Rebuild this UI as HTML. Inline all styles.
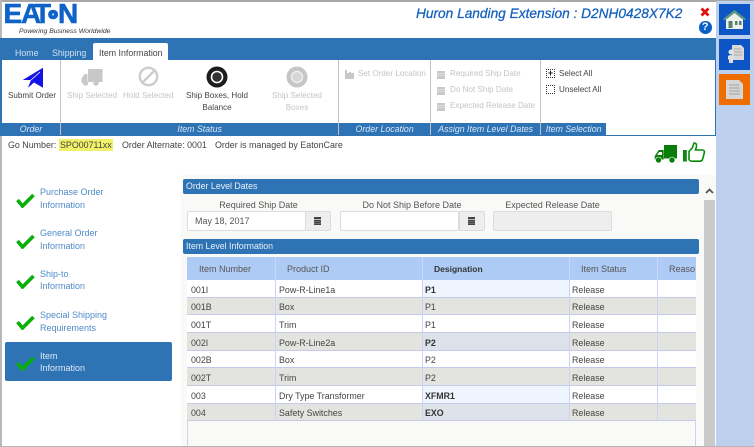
<!DOCTYPE html>
<html><head><meta charset="utf-8"><style>
html,body{margin:0;padding:0;background:#fff}
body{width:754px;height:447px;position:relative;overflow:hidden;font-family:"Liberation Sans",sans-serif;color:#444}
#w{position:absolute;left:0;top:0;width:754px;height:447px;overflow:hidden;background:#fff;filter:blur(.25px)}
.a{position:absolute}
.t{position:absolute;white-space:nowrap;font-size:8.1px;line-height:12px}
.c{text-align:center}
.dis{color:#c4c4c4}
.foot{position:absolute;top:123px;height:12px;background:#2e74b5;color:#d9e6f5;font-style:italic;font-size:8.8px;line-height:12px;text-align:center;white-space:nowrap;overflow:hidden}
.sec{position:absolute;left:183px;width:516px;background:#2e74b5;color:#e8f0fa;font-size:8.8px;border-radius:2px}
.nav{position:absolute;left:40px;font-size:9px;line-height:12.6px;color:#4f8ac8;white-space:nowrap}
.lbl{position:absolute;top:199px;font-size:9px;line-height:12px;color:#555;white-space:nowrap;text-align:center}
.inp{position:absolute;top:211px;height:18px;border:1px solid #dcdcdc;border-radius:2px;background:#fff;box-sizing:content-box}
.add{position:absolute;top:211px;width:24px;height:18px;border:1px solid #dcdcdc;border-radius:0 2px 2px 0;background:#eeeeee}
.r{position:absolute;left:187px;width:509px;height:16.7px;border-bottom:1px solid #c5c9ea}
.r.g{background:#e3e3e0}
.r.w{background:#fff}
.r span{position:absolute;top:3.5px;font-size:8.9px;line-height:12px;color:#444;white-space:nowrap}
.r i{position:absolute;top:0;bottom:-1px;width:1px;background:#cdd2ee}
.r b.bg{position:absolute;left:236px;width:146px;top:0;bottom:0}
.r strong{position:absolute;top:3.5px;left:238px;font-size:8.8px;line-height:12px;color:#333}
.h{position:absolute;top:262.5px;font-size:9px;line-height:12px;color:#555;white-space:nowrap}
.lg{position:absolute;font-weight:bold;color:#0f62c8;line-height:28px;font-size:28px;white-space:nowrap;transform-origin:0 0}
</style></head><body><div id="w">
<!-- frame -->
<div class="a" style="left:0;top:0;width:754px;height:1.5px;background:#a8a8a8"></div>
<div class="a" style="left:0;top:0;width:1.5px;height:447px;background:#b8b8b8"></div>
<div class="a" style="left:0;top:445.5px;width:754px;height:1.5px;background:#b4b4b4"></div>
<!-- right rail -->
<div class="a" style="left:716px;top:1px;width:38px;height:445px;background:#bdd0ee"></div>
<div class="a" style="left:719px;top:4px;width:31px;height:31px;background:#0d55c4"></div>
<svg class="a" style="left:719px;top:4px" width="31" height="31" viewBox="0 0 31 31"><path d="M4 15L15.500 6 27 15l-1.500 1L15.500 9 5.500 16z" fill="#5e9c78"/><rect x="7" y="15" width="17" height="10" fill="#f0f0ea"/><path d="M15.500 9L7 15.500h17z" fill="#f0f0ea"/><rect x="9.500" y="17" width="4" height="7" fill="#55806a"/><rect x="16" y="17" width="2.500" height="4" fill="#55806a"/><rect x="20" y="17" width="2.500" height="4" fill="#55806a"/></svg>
<div class="a" style="left:719px;top:39px;width:31px;height:31px;background:#0d55c4"></div>
<svg class="a" style="left:719px;top:39px" width="31" height="31" viewBox="0 0 31 31"><path d="M13 6h9l3 3v12H13z" fill="#d8d8d8"/><path d="M15 10h7M15 13h8M15 16h8" stroke="#aaa" fill="none"/><circle cx="12" cy="13" r="2.500" fill="#e6e6e6"/><path d="M9 17q3-2 6 0v3l-1 1v3h-4v-3l-1-1z" fill="#e0e0e0"/></svg>
<div class="a" style="left:719px;top:74px;width:31px;height:31px;background:#ee6c00"></div>
<svg class="a" style="left:719px;top:74px" width="31" height="31" viewBox="0 0 31 31"><path d="M7 6h13l4 4v15H7z" fill="#d6d6d6"/><path d="M10 11h10M10 14h11M10 17h11M10 20h11" stroke="#a2a2a2" fill="none"/></svg>
<!-- logo -->
<div class="lg" style="left:3.500px;top:0;-webkit-text-stroke:.6px #0f62c8">E</div>
<div class="lg" style="left:21px;top:0;-webkit-text-stroke:.4px #0f62c8">A</div>
<div class="lg" style="left:34px;top:0;-webkit-text-stroke:.4px #0f62c8">T</div>
<div class="lg" style="left:49px;top:9.500px;font-size:10.500px;line-height:11px;-webkit-text-stroke:2.600px #0f62c8">O</div>
<div class="lg" style="left:58px;top:0;-webkit-text-stroke:.6px #0f62c8">N</div>
<div class="t" style="left:19px;top:26px;font-size:6.800px;font-style:italic;color:#333">Powering Business Worldwide</div>
<!-- title -->
<div class="t" style="left:416px;top:5px;font-size:13.700px;line-height:17px;font-style:italic;color:#1260be;-webkit-text-stroke:.25px #1260be">Huron Landing Extension : D2NH0428X7K2</div>
<svg class="a" style="left:699px;top:6px" width="12" height="12" viewBox="0 0 12 12"><path d="M2.500 2.500l7 7M9.500 2.500l-7 7" stroke="#e01010" stroke-width="2.800"/></svg>
<div class="a" style="left:699px;top:21px;width:12.500px;height:12.500px;border-radius:50%;background:#0b5fc8;color:#fff;font-weight:bold;font-size:11px;line-height:12.500px;text-align:center">?</div>
<!-- ribbon -->
<div class="a" style="left:0;top:38px;width:716px;height:98px;background:#2e74b5;box-sizing:border-box"></div>
<div class="a" style="left:2px;top:60px;width:712.500px;height:75px;background:#fff"></div>
<div class="t" style="left:15px;top:46.500px;font-size:8.800px;color:#cfe0f3">Home</div>
<div class="t" style="left:52px;top:46.500px;font-size:8.800px;color:#cfe0f3">Shipping</div>
<div class="a" style="left:93px;top:43px;width:75px;height:18px;background:#fff;border-radius:2px 2px 0 0"></div>
<div class="t" style="left:99px;top:46.500px;font-size:8.800px;color:#444">Item Information</div>
<!-- group separators -->
<div class="a" style="left:60px;top:60px;width:1.300px;height:75px;background:#c2c2c2"></div>
<div class="a" style="left:338px;top:60px;width:1.300px;height:75px;background:#c2c2c2"></div>
<div class="a" style="left:430px;top:60px;width:1.300px;height:75px;background:#c2c2c2"></div>
<div class="a" style="left:540px;top:60px;width:1.300px;height:75px;background:#c2c2c2"></div>
<div class="foot" style="left:2px;width:58px">Order</div>
<div class="foot" style="left:61.300px;width:276.700px">Item Status</div>
<div class="foot" style="left:339.300px;width:90.700px">Order Location</div>
<div class="foot" style="left:431.300px;width:108.700px">Assign Item Level Dates</div>
<div class="foot" style="left:541.300px;width:64.700px">Item Selection</div>
<!-- ribbon icons -->
<svg class="a" style="left:22px;top:67px" width="22" height="22" viewBox="0 0 22 22"><path d="M21 .7L.7 13 9 13 6 20.700 12 15.500 21 20.700z" fill="#1212e6"/><path d="M18 5L9 13" stroke="#fff" stroke-width=".8"/></svg>
<svg class="a" style="left:81px;top:68px" width="22" height="19" viewBox="0 0 22 19"><rect x="7" y="1" width="14.500" height="13" fill="#c8c8c8"/><path d="M.5 10.500l3-4.500h3v9H.5z" fill="#c8c8c8"/><circle cx="4.500" cy="15" r="2.700" fill="#c8c8c8"/><circle cx="15" cy="15" r="2.700" fill="#c8c8c8"/></svg>
<svg class="a" style="left:138px;top:66px" width="21" height="21" viewBox="0 0 21 21"><circle cx="10.500" cy="10.500" r="8.700" fill="none" stroke="#cdcdcd" stroke-width="2.400"/><path d="M4.500 16.500l12-12" stroke="#cdcdcd" stroke-width="2.400"/></svg>
<svg class="a" style="left:206px;top:66px" width="22" height="22" viewBox="0 0 22 22"><circle cx="11" cy="11" r="10.500" fill="#1d1d1d"/><circle cx="11" cy="11" r="5.500" fill="none" stroke="#fff" stroke-width="1.600"/><circle cx="11" cy="11" r="4.500" fill="#333"/></svg>
<svg class="a" style="left:286px;top:66px" width="22" height="22" viewBox="0 0 22 22"><circle cx="11" cy="11" r="10.500" fill="#c6c6c6"/><circle cx="11" cy="11" r="5.500" fill="#d6d6d6" stroke="#eee" stroke-width="1.500"/></svg>
<div class="t" style="left:8px;top:90px;color:#444">Submit Order</div>
<div class="t dis" style="left:67px;top:90px">Ship Selected</div>
<div class="t dis" style="left:123px;top:90px">Hold Selected</div>
<div class="t c" style="left:176px;top:90px;width:82px;line-height:12px;color:#444">Ship Boxes, Hold<br>Balance</div>
<div class="t c dis" style="left:262px;top:90px;width:70px;line-height:12px">Ship Selected<br>Boxes</div>
<svg class="a" style="left:345px;top:70px" width="9" height="9" viewBox="0 0 9 9"><path d="M0 0h2v3h2v-1h2v1h3v6H0z" fill="#c8c8c8"/></svg>
<div class="t dis" style="left:358px;top:68px">Set Order Location</div>
<svg class="a" style="left:437px;top:70px" width="8" height="9" viewBox="0 0 8 9"><path d="M0 1h8v8H0z" fill="#c8c8c8"/><path d="M0 3.500h8M0 5.500h8" stroke="#eee" stroke-width=".6"/></svg>
<svg class="a" style="left:437px;top:86px" width="8" height="9" viewBox="0 0 8 9"><path d="M0 1h8v8H0z" fill="#c8c8c8"/><path d="M0 3.500h8M0 5.500h8" stroke="#eee" stroke-width=".6"/></svg>
<svg class="a" style="left:437px;top:102px" width="8" height="9" viewBox="0 0 8 9"><path d="M0 1h8v8H0z" fill="#c8c8c8"/><path d="M0 3.500h8M0 5.500h8" stroke="#eee" stroke-width=".6"/></svg>
<div class="t dis" style="left:450px;top:68px">Required Ship Date</div>
<div class="t dis" style="left:450px;top:84px">Do Not Ship Date</div>
<div class="t dis" style="left:450px;top:100px">Expected Release Date</div>
<div class="a" style="left:546px;top:69px;width:7px;height:7px;border:1px dotted #333"></div>
<div class="a" style="left:546px;top:69px;width:9px;height:9px;font-size:9px;line-height:9px;text-align:center;color:#222;font-weight:bold">+</div>
<div class="a" style="left:546px;top:85px;width:7px;height:7px;border:1px dotted #333"></div>
<div class="t" style="left:559px;top:68px">Select All</div>
<div class="t" style="left:559px;top:84px">Unselect All</div>
<!-- go line -->
<div class="a" style="left:59px;top:139px;width:54px;height:12px;background:#f1f167"></div>
<div class="t" style="left:8px;top:139px;font-size:8.900px;color:#444">Go Number:</div>
<div class="t" style="left:60px;top:139px;font-size:8.900px;color:#444">SPO00711xx</div>
<div class="t" style="left:122px;top:139px;font-size:8.900px;color:#444">Order Alternate: 0001</div>
<div class="t" style="left:215px;top:139px;font-size:8.900px;color:#444">Order is managed by EatonCare</div>
<svg class="a" style="left:654px;top:144px" width="24" height="20" viewBox="0 0 24 20"><rect x="10" y="1" width="13" height="13.500" fill="#0a7d0a"/><path d="M.7 12l4-6h5v9.500H.7z" fill="#0a7d0a"/><path d="M3 11l2.200-3H8v3z" fill="#fff"/><circle cx="4.500" cy="16" r="3" fill="#0a7d0a" stroke="#fff" stroke-width=".6"/><circle cx="18" cy="16" r="3" fill="#0a7d0a" stroke="#fff" stroke-width=".6"/></svg>
<svg class="a" style="left:682px;top:141px" width="25" height="22" viewBox="0 0 25 22"><rect x="1" y="9" width="3.800" height="11.500" fill="#0a8a0a"/><path d="M7 10.500l3.500-4 1.500-4.500q3 0 2.500 3.500L13.500 9h6.500q3 0 2.300 2.800l-1.600 6q-.5 2.400-3 2.400H10.500q-2.500 0-3.500-1.700z" fill="#fff" stroke="#0a8a0a" stroke-width="1.600"/></svg>
<!-- sidebar -->
<div class="a" style="left:5px;top:342px;width:167px;height:39px;background:#2e74b5;border-radius:2px"></div>
<div class="nav" style="top:186px">Purchase Order<br>Information</div>
<div class="nav" style="top:227px">General Order<br>Information</div>
<div class="nav" style="top:267.500px">Ship-to<br>Information</div>
<div class="nav" style="top:309px">Special Shipping<br>Requirements</div>
<div class="nav" style="top:349.500px;color:#dce8f6">Item<br>Information</div>
<svg class="a" style="left:16px;top:192px" width="19" height="16" viewBox="0 0 19 16"><path d="M1.500 8l5 6L17.500 3" fill="none" stroke="#06b006" stroke-width="3.600"/></svg>
<svg class="a" style="left:16px;top:233px" width="19" height="16" viewBox="0 0 19 16"><path d="M1.500 8l5 6L17.500 3" fill="none" stroke="#06b006" stroke-width="3.600"/></svg>
<svg class="a" style="left:16px;top:273px" width="19" height="16" viewBox="0 0 19 16"><path d="M1.500 8l5 6L17.500 3" fill="none" stroke="#06b006" stroke-width="3.600"/></svg>
<svg class="a" style="left:16px;top:314px" width="19" height="16" viewBox="0 0 19 16"><path d="M1.500 8l5 6L17.500 3" fill="none" stroke="#06b006" stroke-width="3.600"/></svg>
<svg class="a" style="left:16px;top:355px" width="19" height="16" viewBox="0 0 19 16"><path d="M1.500 8l5 6L17.500 3" fill="none" stroke="#06b006" stroke-width="3.600"/></svg>
<!-- main -->
<div class="a" style="left:181px;top:175px;width:535px;height:270.500px;background:#f9f9f8"></div>
<div class="a" style="left:704px;top:200px;width:11px;height:245.500px;background:#cacaca"></div>
<svg class="a" style="left:704px;top:187px" width="11" height="8" viewBox="0 0 11 8"><path d="M2 6l3.500-3.500L9 6" fill="none" stroke="#555" stroke-width="1.800"/></svg>
<div class="sec" style="top:179px;height:15px;line-height:15px;text-indent:3px">Order Level Dates</div>
<div class="lbl" style="left:187px;width:143px">Required Ship Date</div>
<div class="lbl" style="left:340px;width:144px">Do Not Ship Before Date</div>
<div class="lbl" style="left:493px;width:119px">Expected Release Date</div>
<div class="inp" style="left:187px;width:117px"></div>
<div class="add" style="left:305px"></div>
<div class="t" style="left:195px;top:215px;font-size:9px;color:#555">May 18, 2017</div>
<div class="inp" style="left:340px;width:117px"></div>
<div class="add" style="left:459px"></div>
<div class="inp" style="left:493px;width:117px;background:#eeeeee"></div>
<svg class="a" style="left:313px;top:216px" width="9" height="9" viewBox="0 0 9 9"><path d="M1 1h7v8H1z" fill="#444"/><path d="M1 3.500h7" stroke="#eee" stroke-width=".7"/><path d="M1 5.500h7M1 7.300h7" stroke="#999" stroke-width=".5"/></svg>
<svg class="a" style="left:467px;top:216px" width="9" height="9" viewBox="0 0 9 9"><path d="M1 1h7v8H1z" fill="#444"/><path d="M1 3.500h7" stroke="#eee" stroke-width=".7"/><path d="M1 5.500h7M1 7.300h7" stroke="#999" stroke-width=".5"/></svg>
<div class="sec" style="top:239px;height:14.500px;line-height:14.500px;text-indent:3px">Item Level Information</div>
<!-- table -->
<div class="a" style="left:187px;top:257px;width:509px;height:188.500px;border-left:1px solid #cdd2ee;border-right:1px solid #cdd2ee;box-sizing:border-box"></div>
<div class="a" style="left:187px;top:257px;width:509px;height:23px;background:#aecbf5"></div>
<div class="a" style="left:275px;top:257px;width:1px;height:23px;background:#c8d8f2"></div>
<div class="a" style="left:422px;top:257px;width:1px;height:23px;background:#c8d8f2"></div>
<div class="a" style="left:569px;top:257px;width:1px;height:23px;background:#c8d8f2"></div>
<div class="a" style="left:657px;top:257px;width:1px;height:23px;background:#c8d8f2"></div>
<div class="h" style="left:199px">Item Number</div>
<div class="h" style="left:287px">Product ID</div>
<div class="h" style="left:434px;font-weight:bold;color:#333;font-size:8.500px">Designation</div>
<div class="h" style="left:581px">Item Status</div>
<div class="h" style="left:669px;width:26px;overflow:hidden">Reaso</div>

<div class="r w" style="top:280px"><b class="bg" style="background:#eff5fe"></b><span style="left:4px">001I</span><span style="left:92px">Pow-R-Line1a</span><strong>P1</strong><span style="left:385px">Release</span><i style="left:88px"></i><i style="left:235px"></i><i style="left:382px"></i><i style="left:470px"></i></div>
<div class="r g" style="top:297.700px"><span style="left:4px">001B</span><span style="left:92px">Box</span><span style="left:238px">P1</span><span style="left:385px">Release</span><i style="left:88px"></i><i style="left:235px"></i><i style="left:382px"></i><i style="left:470px"></i></div>
<div class="r w" style="top:315.400px"><span style="left:4px">001T</span><span style="left:92px">Trim</span><span style="left:238px">P1</span><span style="left:385px">Release</span><i style="left:88px"></i><i style="left:235px"></i><i style="left:382px"></i><i style="left:470px"></i></div>
<div class="r g" style="top:333px"><b class="bg" style="background:#dde2ea"></b><span style="left:4px">002I</span><span style="left:92px">Pow-R-Line2a</span><strong>P2</strong><span style="left:385px">Release</span><i style="left:88px"></i><i style="left:235px"></i><i style="left:382px"></i><i style="left:470px"></i></div>
<div class="r w" style="top:350.700px"><span style="left:4px">002B</span><span style="left:92px">Box</span><span style="left:238px">P2</span><span style="left:385px">Release</span><i style="left:88px"></i><i style="left:235px"></i><i style="left:382px"></i><i style="left:470px"></i></div>
<div class="r g" style="top:368.400px"><span style="left:4px">002T</span><span style="left:92px">Trim</span><span style="left:238px">P2</span><span style="left:385px">Release</span><i style="left:88px"></i><i style="left:235px"></i><i style="left:382px"></i><i style="left:470px"></i></div>
<div class="r w" style="top:386px"><b class="bg" style="background:#eff5fe"></b><span style="left:4px">003</span><span style="left:92px">Dry Type Transformer</span><strong>XFMR1</strong><span style="left:385px">Release</span><i style="left:88px"></i><i style="left:235px"></i><i style="left:382px"></i><i style="left:470px"></i></div>
<div class="r g" style="top:403.700px"><b class="bg" style="background:#dde2ea"></b><span style="left:4px">004</span><span style="left:92px">Safety Switches</span><strong>EXO</strong><span style="left:385px">Release</span><i style="left:88px"></i><i style="left:235px"></i><i style="left:382px"></i><i style="left:470px"></i></div>
</div></body></html>
